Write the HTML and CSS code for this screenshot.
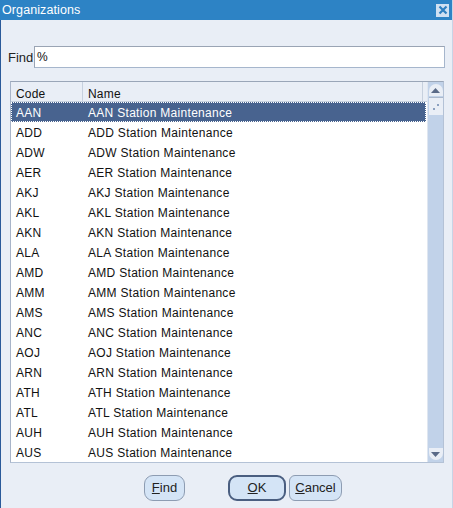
FILE: index.html
```html
<!DOCTYPE html>
<html>
<head>
<meta charset="utf-8">
<link rel="stylesheet" href="styles.css">
</head>
<body>
<div class="window">
  <div class="titlebar">
    <span class="title">Organizations</span>
    <span class="close">
      <svg width="10" height="10" viewBox="0 0 10 10"><path d="M1.5 1.5 L8.5 8.5 M8.5 1.5 L1.5 8.5" stroke="#2e7fc0" stroke-width="2.2"/></svg>
    </span>
  </div>
  <div class="content">
    <div class="find-row">
      <span class="find-label">Find</span>
      <div class="find-input">%</div>
    </div>
    <div class="list">
      <div class="grid">
        <div class="header">
          <div class="col-code">Code</div>
          <div class="col-name">Name</div>
          <div class="col-fill"></div>
        </div>
        <div class="rows">
          <div class="row selected"><div class="col-code">AAN</div><div class="col-name">AAN Station Maintenance</div></div>
          <div class="row"><div class="col-code">ADD</div><div class="col-name">ADD Station Maintenance</div></div>
          <div class="row"><div class="col-code">ADW</div><div class="col-name">ADW Station Maintenance</div></div>
          <div class="row"><div class="col-code">AER</div><div class="col-name">AER Station Maintenance</div></div>
          <div class="row"><div class="col-code">AKJ</div><div class="col-name">AKJ Station Maintenance</div></div>
          <div class="row"><div class="col-code">AKL</div><div class="col-name">AKL Station Maintenance</div></div>
          <div class="row"><div class="col-code">AKN</div><div class="col-name">AKN Station Maintenance</div></div>
          <div class="row"><div class="col-code">ALA</div><div class="col-name">ALA Station Maintenance</div></div>
          <div class="row"><div class="col-code">AMD</div><div class="col-name">AMD Station Maintenance</div></div>
          <div class="row"><div class="col-code">AMM</div><div class="col-name">AMM Station Maintenance</div></div>
          <div class="row"><div class="col-code">AMS</div><div class="col-name">AMS Station Maintenance</div></div>
          <div class="row"><div class="col-code">ANC</div><div class="col-name">ANC Station Maintenance</div></div>
          <div class="row"><div class="col-code">AOJ</div><div class="col-name">AOJ Station Maintenance</div></div>
          <div class="row"><div class="col-code">ARN</div><div class="col-name">ARN Station Maintenance</div></div>
          <div class="row"><div class="col-code">ATH</div><div class="col-name">ATH Station Maintenance</div></div>
          <div class="row"><div class="col-code">ATL</div><div class="col-name">ATL Station Maintenance</div></div>
          <div class="row"><div class="col-code">AUH</div><div class="col-name">AUH Station Maintenance</div></div>
          <div class="row"><div class="col-code">AUS</div><div class="col-name">AUS Station Maintenance</div></div>
        </div>
      </div>
      <div class="scrollbar">
        <div class="sb-up">
          <svg width="9" height="5" viewBox="0 0 9 5"><path d="M4.5 0 L9 5 L0 5 Z" fill="#5a6a88"/></svg>
        </div>
        <div class="sb-thumb">
          <svg width="8" height="8" viewBox="0 0 8 8"><rect x="5" y="1" width="2" height="2" fill="#8aa0c0"/><rect x="1" y="5" width="2" height="2" fill="#8aa0c0"/></svg>
        </div>
        <div class="sb-track"></div>
        <div class="sb-down">
          <svg width="9" height="5" viewBox="0 0 9 5"><path d="M0 0 L9 0 L4.5 5 Z" fill="#5a6a88"/></svg>
        </div>
      </div>
    </div>
    <div class="buttons">
      <button class="btn btn-find"><u>F</u>ind</button>
      <button class="btn btn-ok"><u>O</u>K</button>
      <button class="btn btn-cancel"><u>C</u>ancel</button>
    </div>
  </div>
</div>
</body>
</html>
```

FILE: styles.css
```css
* { box-sizing: border-box; }
html, body { margin: 0; padding: 0; }
body {
  width: 453px;
  height: 508px;
  overflow: hidden;
  font-family: "Liberation Sans", Arial, sans-serif;
  font-size: 12px;
  color: #111;
  background: #e9eef6;
}
.window {
  width: 453px;
  height: 508px;
  display: flex;
  flex-direction: column;
  border-left: 1px solid #2a5a9a;
  border-right: 1px solid #c8d4e6;
  background: #e9eef6;
}
.titlebar {
  height: 20px;
  background: #2d83c5;
  display: flex;
  align-items: center;
  justify-content: space-between;
  padding: 0 3px 0 2px;
  margin-left: -1px;
}
.title {
  color: #fff;
  font-size: 12.5px;
  letter-spacing: 0.1px;
}
.close {
  width: 13px;
  height: 13px;
  background: #cfe0f2;
  display: flex;
  align-items: center;
  justify-content: center;
}
.content {
  flex: 1;
  display: flex;
  flex-direction: column;
  padding: 25px 7px 0 7px;
}
.find-row {
  display: flex;
  align-items: center;
  height: 23px;
}
.find-label {
  width: 26px;
  font-size: 13px;
  color: #222;
  padding-top: 2px;
}
.find-input {
  flex: 1;
  height: 22px;
  background: #fff;
  border: 1px solid #a6b6cc;
  border-top-color: #9aa4b4;
  border-left-color: #9aa4b4;
  padding: 3px 2px;
  font-size: 12px;
  line-height: 15px;
}
.list {
  margin: 13px 1px 0 2px;
  height: 382px;
  border: 1px solid #b4c2d6;
  border-top-color: #9aa6b8;
  border-left-color: #a8b4c8;
  display: flex;
  background: #fff;
}
.grid {
  flex: 1;
  display: flex;
  flex-direction: column;
}
.header {
  height: 20px;
  display: flex;
  background: #e9eef6;
  border-bottom: 1px solid #c8d2e0;
  letter-spacing: 0.2px;
}
.header .col-code, .header .col-name {
  border-right: 1px solid #c6d0de;
  line-height: 19px;
  padding-top: 3px;
}
.header .col-fill {
  flex: 1;
}
.col-code {
  width: 72px;
  padding-left: 5px;
}
.col-name {
  width: 334px;
  padding-left: 5px;
}
.header .col-name { width: 340px; border-right: 1px solid #c6d0de; }
.rows {
  flex: 1;
  display: flex;
  flex-direction: column;
  letter-spacing: 0.3px;
}
.row {
  height: 20px;
  display: flex;
  line-height: 22px;
  color: #111;
}
.row.selected {
  background: #48638f;
  color: #fff;
  outline: 1px dotted #fff;
  outline-offset: -1px;
  margin-right: 1px;
}
.scrollbar {
  width: 16px;
  background: #c1d2e9;
  display: flex;
  flex-direction: column;
  align-items: center;
  border-left: 1px solid #dfe6f0;
}
.sb-up, .sb-down {
  width: 14px;
  height: 12px;
  background: #e9eef6;
  display: flex;
  align-items: center;
  justify-content: center;
}
.sb-up {
  border-radius: 7px 7px 0 0;
  margin-top: 2px;
}
.sb-down {
  border-radius: 0 0 7px 7px;
  margin-bottom: 2px;
}
.sb-thumb {
  width: 14px;
  height: 18px;
  margin-top: 1px;
  background: #e9eef6;
  border-top: 1px solid #aab8cc;
  display: flex;
  align-items: center;
  justify-content: center;
}
.sb-track { flex: 1; }
.buttons {
  display: flex;
  padding-left: 136px;
  margin-top: 12px;
}
.btn {
  font-family: "Liberation Sans", Arial, sans-serif;
  font-size: 13px;
  height: 26px;
  background: #d4e4f6;
  border: 1px solid #8d9cb2;
  border-radius: 9px;
  color: #222;
  padding: 0;
  line-height: 22px;
}
.btn u { text-decoration: underline; }
.btn-find { width: 41px; }
.btn-ok { width: 58px; margin-left: 43px; border: 2px solid #4a5e80; }
.btn-cancel { width: 53px; margin-left: 3px; border-radius: 6px 9px 9px 6px; }
```
